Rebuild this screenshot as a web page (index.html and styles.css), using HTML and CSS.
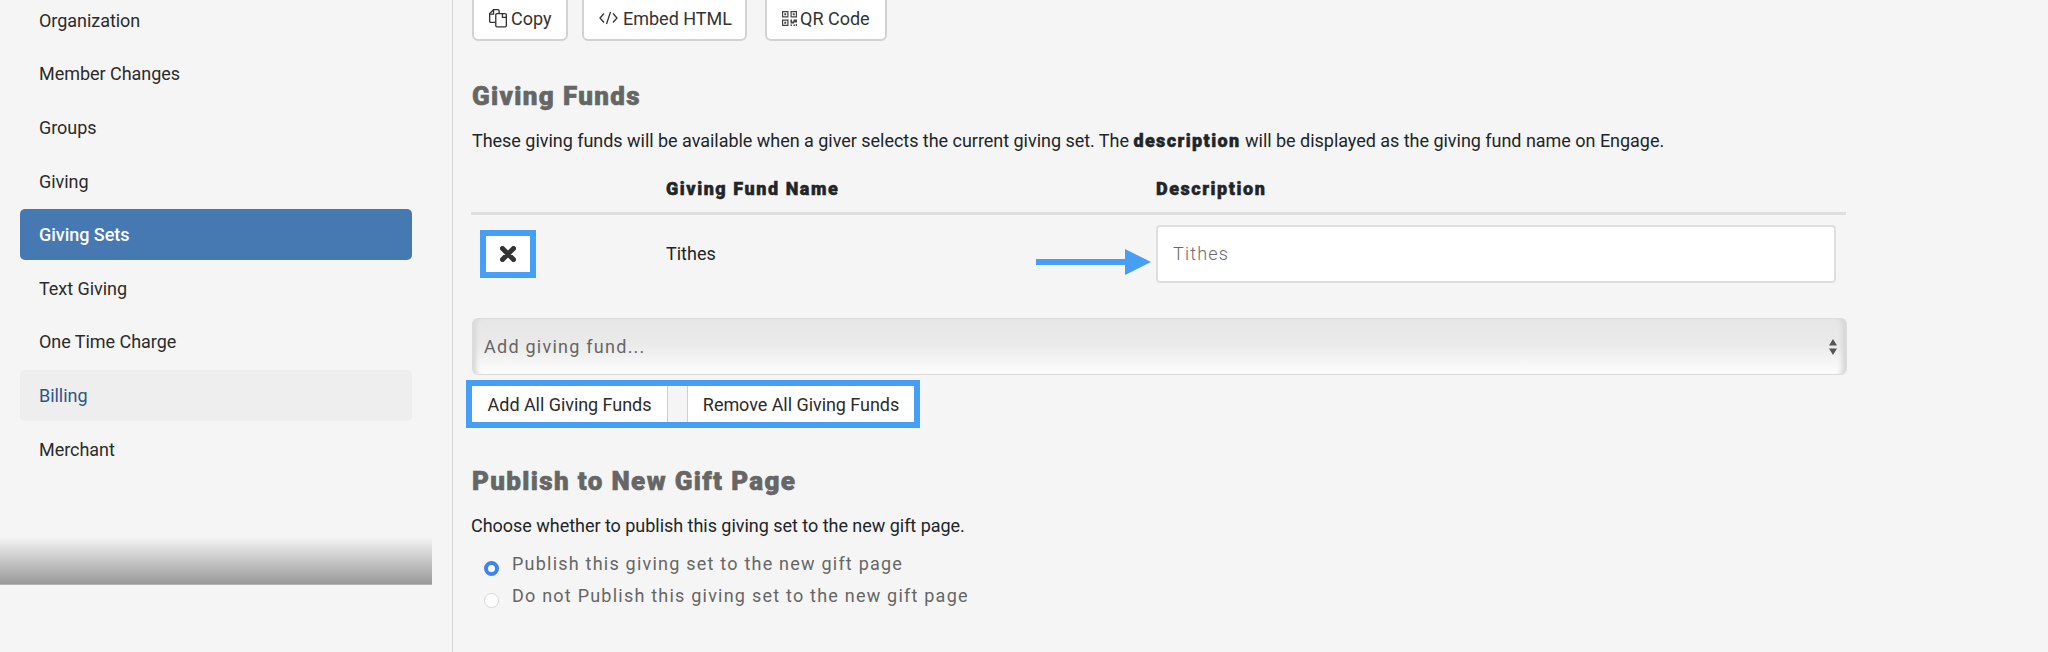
FILE: index.html
```html
<!DOCTYPE html>
<html lang="en">
<head>
<meta charset="utf-8">
<title>Giving Sets</title>
<link rel="stylesheet" href="styles.css">
</head>
<body>
<div class="page">
  <aside class="sidebar">
    <nav class="nav">
      <a class="nav-item">Organization</a>
      <a class="nav-item">Member Changes</a>
      <a class="nav-item">Groups</a>
      <a class="nav-item">Giving</a>
      <a class="nav-item active">Giving Sets</a>
      <a class="nav-item">Text Giving</a>
      <a class="nav-item">One Time Charge</a>
      <a class="nav-item hover">Billing</a>
      <a class="nav-item">Merchant</a>
    </nav>
    <div class="fade"></div>
  </aside>
  <main class="content">
    <div class="toolbar">
      <button class="btn btn-copy">
        <svg class="ico" width="20" height="20" viewBox="0 0 18 18" fill="none" stroke="#333" stroke-width="1.2"><path d="M7 13H2.500a1 1 0 0 1-1-1V5l3.500-3.500h4a1 1 0 0 1 1 1V5"/><path d="M1.500 5.500H5V1.500"/><rect x="7" y="5" width="9.500" height="12" rx="1"/><path d="M13 5v3.500h3.500"/></svg>
        Copy
      </button>
      <button class="btn btn-embed">
        <svg class="ico" width="19" height="14" viewBox="0 0 19 14" fill="none" stroke="#333" stroke-width="1.3"><path d="M5 2.500 1 7l4 4.500M14 2.500 18 7l-4 4.500M11.500 1 7.500 13"/></svg>
        Embed HTML
      </button>
      <button class="btn btn-qr">
        <svg class="ico" width="15" height="15" viewBox="0 0 15 15" fill="#444"><path d="M0 0h6.500v6.500H0zm1.200 1.200v4.100h4.100V1.200zM8.500 0H15v6.500H8.500zm1.200 1.200v4.100h4.100V1.200zM0 8.500h6.500V15H0zm1.200 1.200v4.100h4.100V9.700z" fill-rule="evenodd"/><path d="M2.300 2.300h1.900v1.900H2.300zM10.800 2.300h1.900v1.900h-1.900zM2.300 10.800h1.900v1.900H2.300zM8.500 8.500h1.500v2h1.500V8.500H15v3h-3v1H8.500zM8.500 13.500h1.500V15H8.500zM11.500 13.500H13V15h-1.500zM13.800 13h1.200v2h-1.200z"/></svg>
        QR Code
      </button>
    </div>

    <h2 class="section-title funds-title">Giving Funds</h2>
    <p class="lead">These giving funds will be available when a giver selects the current giving set. The <strong>description</strong> will be displayed as the giving fund name on Engage.</p>

    <div class="fund-table">
      <div class="fund-head">
        <span></span>
        <span>Giving Fund Name</span>
        <span>Description</span>
      </div>
      <div class="fund-row">
        <div class="remove-cell">
          <button class="remove-btn">
            <svg width="16" height="16" viewBox="0 0 16 16"><path d="M2.500 2.500l11 11M13.500 2.500l-11 11" stroke="#333" stroke-width="5" stroke-linecap="round"/></svg>
          </button>
        </div>
        <div class="name-cell">
          <span>Tithes</span>
          <svg class="arrow" width="115" height="26" viewBox="0 0 115 26"><path d="M0 10h89V0l26 13-26 13V16H0z" fill="#479ef5"/></svg>
        </div>
        <div class="desc-cell"><div class="text-input">Tithes</div></div>
      </div>
    </div>

    <div class="select">
      <span>Add giving fund...</span>
      <svg class="carets" width="8" height="16" viewBox="0 0 8 16" fill="#555"><path d="M4 0l4 6.500H0zM4 16l4-6.500H0z"/></svg>
    </div>

    <div class="bulk">
      <button class="bulk-btn bulk-add">Add All Giving Funds</button>
      <button class="bulk-btn bulk-remove">Remove All Giving Funds</button>
    </div>

    <h2 class="section-title publish-title">Publish to New Gift Page</h2>
    <p class="lead lead-publish">Choose whether to publish this giving set to the new gift page.</p>

    <div class="radios">
      <div class="radio-row"><span class="radio checked"></span><span>Publish this giving set to the new gift page</span></div>
      <div class="radio-row"><span class="radio"></span><span>Do not Publish this giving set to the new gift page</span></div>
    </div>
  </main>
</div>
</body>
</html>
```

FILE: styles.css
```css
* { box-sizing: border-box; }
html, body { margin: 0; height: 652px; overflow: hidden; background: #f5f5f5; }
body { font-family: Roboto, "Liberation Sans", sans-serif; font-size: 18px; color: #212529; }

.page { display: flex; height: 652px; overflow: hidden; }

.sidebar { width: 453px; flex: none; height: 652px; border-right: 1px solid #d4d4d4; padding-right: 20px; }
.nav { display: flex; flex-direction: column; gap: 2.6px; margin-top: -5px; padding-left: 20px; padding-right: 20px; height: 542px; }
.nav-item { display: flex; align-items: center; height: 51px; flex: none; padding: 0 0 0.5px 19px; border-radius: 5px; font-size: 18px; letter-spacing: -0.04px; color: #2b2b2b; }
.nav-item.active { background: #4678b2; color: #fff; font-weight: 500; }
.nav-item.hover { background: #eee; color: #2f5585; }
.fade { height: 48px; background: linear-gradient(#f5f5f5, #999); border-bottom: 1px solid #b5b5b5; }

.content { flex: none; width: 1380px; padding-left: 18px; }

.toolbar { display: flex; margin-top: -10px; height: 51px; margin-left: 1px; }
.btn { display: flex; align-items: center; height: 51px; background: #fff; border: 2px solid #d2d2d2; border-radius: 6px; font: 400 18px Roboto, sans-serif; color: #333; padding: 5px 0 0; }
.ico { flex: none; }
.btn-copy { width: 96px; padding-left: 14px; gap: 3px; }
.btn-embed { width: 165px; margin-left: 14px; padding-left: 15px; gap: 5px; }
.btn-qr { width: 122px; margin-left: 18px; padding-left: 15px; gap: 3px; }

.section-title { margin: 0; font-size: 26px; font-weight: 900; color: #666; letter-spacing: 1.35px; line-height: 30px; -webkit-text-stroke: 0.6px #666; }
.funds-title { margin-top: 40px; margin-left: 1px; }
.lead { margin: 0; line-height: 24px; font-size: 18px; letter-spacing: -0.03px; }
.lead strong { font-weight: 900; letter-spacing: 1.4px; -webkit-text-stroke: 0.5px #212529; }
.funds-title + .lead { margin-top: 18px; margin-left: 1px; }

.fund-table { margin-top: 18px; width: 1375px; }
.fund-head, .fund-row { display: grid; grid-template-columns: 195px 490px 690px; }
.fund-head { height: 44px; align-items: center; font-weight: 900; font-size: 18px; letter-spacing: 1.55px; -webkit-text-stroke: 0.5px #212529; border-bottom: 3px solid #dedede; padding-bottom: 7px; }
.fund-row { height: 104px; align-items: flex-start; }
.remove-cell { padding: 15px 0 0 9px; }
.remove-btn { display: flex; align-items: center; justify-content: center; width: 56px; height: 48px; background: #fff; border: 6px solid #479ef5; padding: 0; }
.name-cell { display: flex; justify-content: space-between; align-items: flex-start; padding-right: 5px; padding-top: 27px; line-height: 24px; }
.arrow { margin-top: 7px; }
.desc-cell { padding-top: 10px; }
.text-input { width: 680px; height: 58px; background: #fff; border: 2px solid #dedede; border-radius: 4px; display: flex; align-items: center; padding: 0 0 2px 15px; color: #6a6a6a; font-weight: 300; letter-spacing: 1.2px; }

.select { display: flex; align-items: center; justify-content: space-between; width: 1375px; height: 57px; margin-left: 1px; margin-top: -1px; border: 1px solid #dcdcdc; border-left-width: 2px; border-radius: 6px; background: linear-gradient(#e6e6e6 0%, #eaeaea 45%, #fdfdfd 100%); padding: 0 9px 0 10px; color: #666; letter-spacing: 1.25px; box-shadow: inset -8px 0 5px -4px #d6d6d6, inset 5px 0 4px -3px #d6d6d6; }
.carets { flex: none; }

.bulk { display: flex; width: 454px; height: 48px; margin-top: 5px; margin-left: -5px; border: 6px solid #479ef5; background: #f5f5f5; }
.bulk-btn { height: 36px; background: #fff; border: 0; padding: 0; font: 400 18px Roboto, sans-serif; letter-spacing: -0.05px; color: #2b2b2b; }
.bulk-add { width: 196px; border-right: 1px solid #cfcfcf; }
.bulk-remove { width: 227px; margin-left: 19px; border-left: 1px solid #cfcfcf; }

.publish-title { margin-top: 38px; margin-left: 1px; }
.lead-publish { margin-top: 18px; }

.radios { margin-top: 14px; margin-left: 13px; color: #666; letter-spacing: 1.22px; }
.radio-row { display: flex; align-items: flex-start; gap: 13px; height: 32.4px; line-height: 24px; }
.radio { flex: none; width: 15px; height: 15px; border-radius: 50%; margin-top: 9px; background: #fff; border: 1.5px solid #d8d8d8; }
.radio.checked { background: #fff; border: 4.500px solid #3f83f0; }
```
